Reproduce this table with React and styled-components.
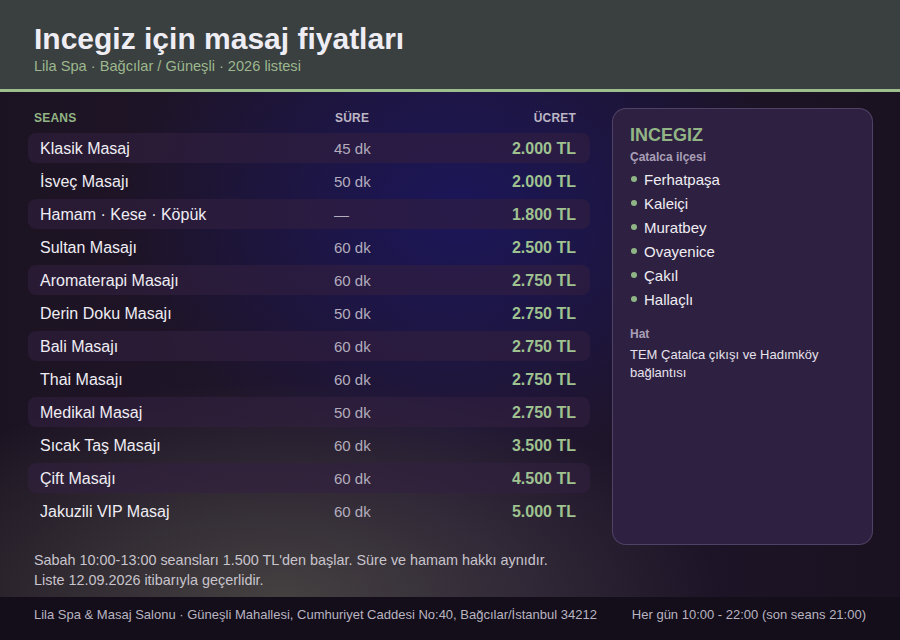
import React from 'react';
import styled, { createGlobalStyle } from 'styled-components';

const GlobalStyle = createGlobalStyle`
  html, body {
    margin: 0;
    padding: 0;
    background: #1a1220;
  }
  body {
    font-family: "Liberation Sans", Arial, sans-serif;
  }
`;

const Page = styled.div`
  width: 900px;
  height: 640px;
  overflow: hidden;
  display: flex;
  flex-direction: column;
  background:
    radial-gradient(ellipse 440px 220px at 280px 600px, rgba(78, 76, 70, 0.8), rgba(78, 76, 70, 0) 100%),
    radial-gradient(ellipse 340px 250px at 460px 210px, rgba(26, 22, 96, 0.85), rgba(26, 22, 96, 0) 100%),
    linear-gradient(90deg, #1c1322 0%, #211630 50%, #1a1220 100%);
`;

const Header = styled.header`
  background: #3a3f3f;
  border-bottom: 3px solid #9dbf8e;
  padding: 22px 34px 10px;
  height: 57px;
`;

const Title = styled.h1`
  margin: 0;
  font-size: 30px;
  line-height: 34px;
  font-weight: 700;
  color: #efedf4;
`;

const Subtitle = styled.div`
  margin-top: 1px;
  font-size: 14.6px;
  line-height: 18px;
  color: #9cb88f;
`;

const Content = styled.main`
  flex: 1;
  padding: 16px 27px 0 28px;
  display: flex;
  flex-direction: column;
`;

const Columns = styled.div`
  display: grid;
  grid-template-columns: 562px 261px;
  gap: 22px;
`;

const Table = styled.div`
  display: flex;
  flex-direction: column;
  gap: 3px;
  padding-bottom: 19px;
`;

const HeadRow = styled.div`
  display: grid;
  grid-template-columns: 301px 1fr auto;
  align-items: center;
  height: 20px;
  padding: 0 14px 0 6px;
  margin-bottom: 2px;
  font-size: 12px;
  font-weight: 700;
  letter-spacing: 0.2px;
`;

const HeadCell = styled.div`
  color: ${(p) => (p.$accent ? '#93b585' : '#bdb6c6')};
  text-align: ${(p) => (p.$right ? 'right' : 'left')};
`;

const Row = styled.div`
  display: grid;
  grid-template-columns: 294px 1fr auto;
  align-items: baseline;
  align-content: center;
  height: 30px;
  padding: 1px 14px 0 12px;
  box-sizing: border-box;
  border-radius: 8px;
  background: ${(p) => (p.$striped ? 'rgba(50, 32, 64, 0.6)' : 'transparent')};
`;

const Name = styled.div`
  font-size: 16px;
  color: #efedf3;
`;

const Duration = styled.div`
  font-size: 15px;
  color: #b3adbd;
`;

const Price = styled.div`
  font-size: 16px;
  font-weight: 700;
  color: #9fc290;
  text-align: right;
`;

const Panel = styled.aside`
  background: #2e2040;
  border: 1px solid rgba(170, 150, 200, 0.28);
  border-radius: 14px;
  padding: 15px 17px;
`;

const PanelTitle = styled.div`
  font-size: 18px;
  font-weight: 700;
  color: #93b585;
  line-height: 22px;
`;

const PanelLabel = styled.div`
  font-size: 12px;
  font-weight: 700;
  color: #a99fb7;
  line-height: 16px;
  margin-top: ${(p) => p.$gap || 0}px;
`;

const List = styled.ul`
  list-style: none;
  margin: 2px 0 0;
  padding: 0;
`;

const Item = styled.li`
  display: flex;
  align-items: center;
  gap: 7px;
  height: 24px;
  font-size: 15px;
  color: #efedf3;

  &::before {
    content: '';
    width: 6px;
    height: 6px;
    border-radius: 50%;
    background: #8fb585;
    margin-left: 1px;
  }
`;

const PanelText = styled.div`
  margin-top: 4px;
  font-size: 13px;
  line-height: 18px;
  color: #e6e2ec;
`;

const Note = styled.div`
  margin-top: 5px;
  padding-left: 6px;
  font-size: 14.4px;
  line-height: 20px;
  color: #c8c4cc;
`;

const Footer = styled.footer`
  display: flex;
  justify-content: space-between;
  padding: 11px 34px 0;
  height: 32px;
  background: #130e1a;
  font-size: 13px;
  line-height: 14px;
  color: #b9b4c0;
`;

const services = [
  ['Klasik Masaj', '45 dk', '2.000 TL'],
  ['İsveç Masajı', '50 dk', '2.000 TL'],
  ['Hamam · Kese · Köpük', '—', '1.800 TL'],
  ['Sultan Masajı', '60 dk', '2.500 TL'],
  ['Aromaterapi Masajı', '60 dk', '2.750 TL'],
  ['Derin Doku Masajı', '50 dk', '2.750 TL'],
  ['Bali Masajı', '60 dk', '2.750 TL'],
  ['Thai Masajı', '60 dk', '2.750 TL'],
  ['Medikal Masaj', '50 dk', '2.750 TL'],
  ['Sıcak Taş Masajı', '60 dk', '3.500 TL'],
  ['Çift Masajı', '60 dk', '4.500 TL'],
  ['Jakuzili VIP Masaj', '60 dk', '5.000 TL'],
];

const areas = ['Ferhatpaşa', 'Kaleiçi', 'Muratbey', 'Ovayenice', 'Çakıl', 'Hallaçlı'];

const App = () => {
  return (
    <Page>
      <GlobalStyle />
      <Header>
        <Title>Incegiz için masaj fiyatları</Title>
        <Subtitle>Lila Spa · Bağcılar / Güneşli · 2026 listesi</Subtitle>
      </Header>

      <Content>
        <Columns>
          <Table>
            <HeadRow>
              <HeadCell $accent>SEANS</HeadCell>
              <HeadCell>SÜRE</HeadCell>
              <HeadCell $right>ÜCRET</HeadCell>
            </HeadRow>
            {services.map(([name, dur, price], i) => (
              <Row key={name} $striped={i % 2 === 0}>
                <Name>{name}</Name>
                <Duration>{dur}</Duration>
                <Price>{price}</Price>
              </Row>
            ))}
          </Table>

          <Panel>
            <PanelTitle>INCEGIZ</PanelTitle>
            <PanelLabel $gap={3}>Çatalca ilçesi</PanelLabel>
            <List>
              {areas.map((a) => (
                <Item key={a}>{a}</Item>
              ))}
            </List>
            <PanelLabel $gap={15}>Hat</PanelLabel>
            <PanelText>TEM Çatalca çıkışı ve Hadımköy bağlantısı</PanelText>
          </Panel>
        </Columns>

        <Note>
          Sabah 10:00-13:00 seansları 1.500 TL'den başlar. Süre ve hamam hakkı aynıdır.
          <br />
          Liste 12.09.2026 itibarıyla geçerlidir.
        </Note>
      </Content>

      <Footer>
        <span>Lila Spa &amp; Masaj Salonu · Güneşli Mahallesi, Cumhuriyet Caddesi No:40, Bağcılar/İstanbul 34212</span>
        <span>Her gün 10:00 - 22:00 (son seans 21:00)</span>
      </Footer>
    </Page>
  );
};

export default App;
